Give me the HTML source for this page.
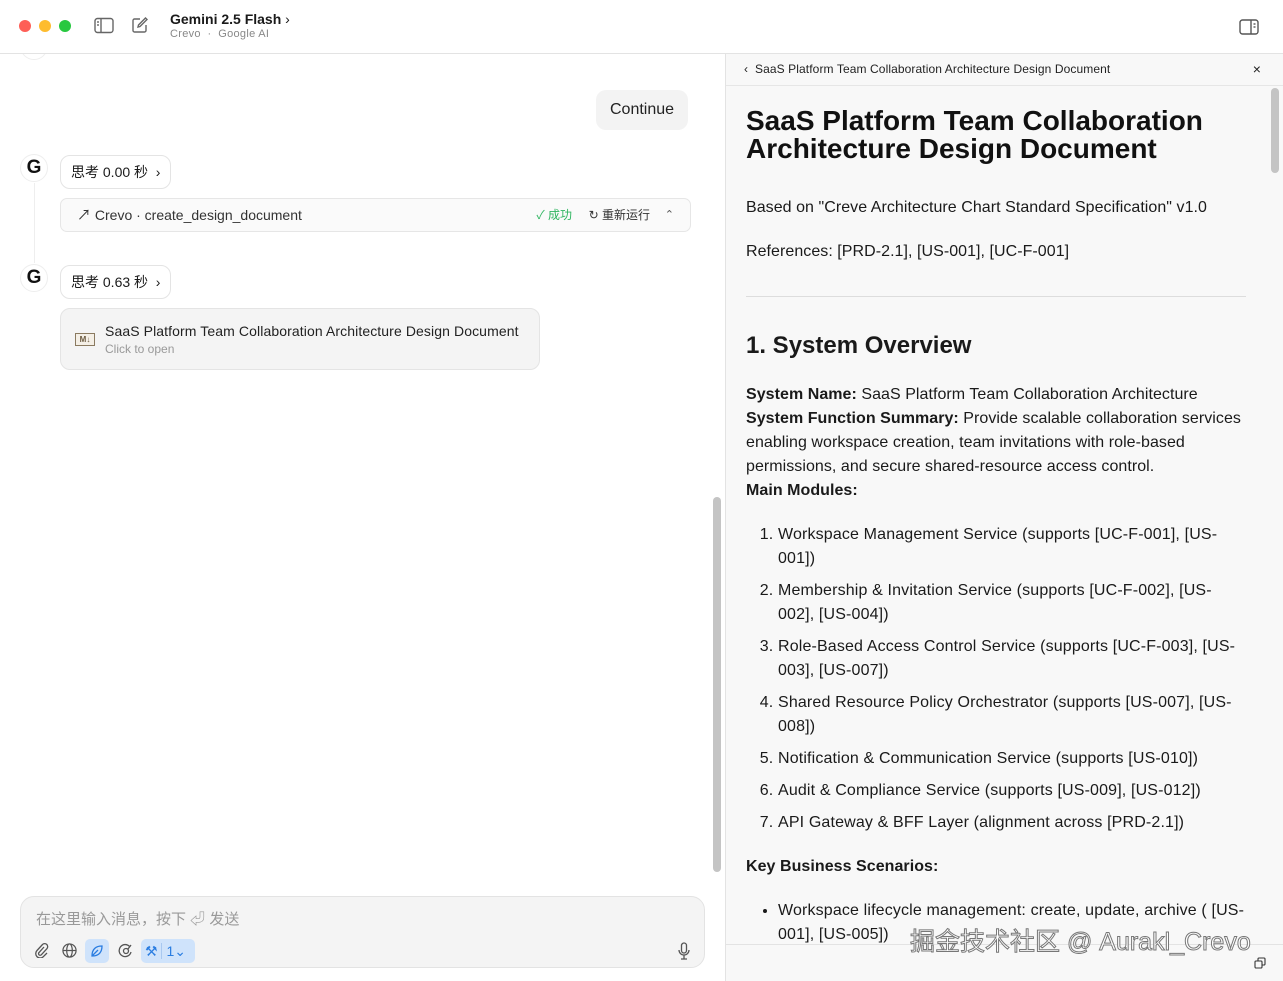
<!DOCTYPE html>
<html><head><meta charset="utf-8"><style>
*{box-sizing:border-box;margin:0;padding:0}
body{width:1283px;height:981px;overflow:hidden;background:#fff;font-family:"Liberation Sans","Noto Sans CJK SC",sans-serif;color:#1a1a1a;position:relative}
.abs{position:absolute}
.top{left:0;top:0;width:1283px;height:54px;border-bottom:1px solid #e3e3e3;background:#fff}
.dot{width:12px;height:12px;border-radius:50%;top:20px}
.pill{border:1px solid #e4e4e4;border-radius:10px;background:#fff;font-size:14px;height:34px;line-height:32px;padding:0 10px}
.gic{width:28px;height:28px;border-radius:50%;border:1px solid #eee;background:#fff;font-weight:bold;font-size:19px;text-align:center;line-height:26px;color:#111}
.doc{left:726px;top:86px;width:540px;height:858px;overflow:hidden;background:#f8f8f8;padding:0 20px}
.doc p{font-size:16px;line-height:24px;letter-spacing:.05px}
ol,ul{font-size:16px;line-height:24px;letter-spacing:.15px}
</style></head><body>
<div class="abs top">
 <div class="abs dot" style="left:19px;background:#fe5f57"></div>
 <div class="abs dot" style="left:39px;background:#febc2e"></div>
 <div class="abs dot" style="left:59px;background:#28c840"></div>
 <svg class="abs" style="left:94px;top:17px" width="20" height="17" viewBox="0 0 20 17" fill="none" stroke="#666" stroke-width="1.4"><rect x="1" y="1.5" width="18" height="14" rx="2.5"/><line x1="7" y1="1.5" x2="7" y2="15.5"/><line x1="3" y1="5" x2="5" y2="5"/><line x1="3" y1="8" x2="5" y2="8"/></svg>
 <svg class="abs" style="left:131px;top:16px" width="18" height="18" viewBox="0 0 18 18" fill="none" stroke="#666" stroke-width="1.4"><path d="M9 3H3.5A1.5 1.5 0 0 0 2 4.5v10A1.5 1.5 0 0 0 3.5 16h10a1.5 1.5 0 0 0 1.5-1.5V9"/><path d="M14.5 2l1.5 1.5L9 10.5 7 11l.5-2z"/></svg>
 <div class="abs" style="left:170px;top:11px;font-size:14px;font-weight:bold;color:#1a1a1a">Gemini 2.5 Flash <span style="font-weight:normal">›</span></div>
 <div class="abs" style="left:170px;top:28px;font-size:11px;color:#888;letter-spacing:.3px">Crevo &nbsp;·&nbsp; Google AI</div>
 <svg class="abs" style="left:1239px;top:19px" width="20" height="16" viewBox="0 0 20 16" fill="none" stroke="#555" stroke-width="1.4"><rect x="1" y="1" width="18" height="14" rx="2.5"/><line x1="12" y1="1" x2="12" y2="15"/><line x1="14.5" y1="5" x2="16.5" y2="5"/><line x1="14.5" y1="8" x2="16.5" y2="8"/></svg>
</div>
<div class="abs gic" style="left:20px;top:32px;z-index:-1">G</div>
<div class="abs" style="left:34px;top:183px;width:1px;height:80px;background:#eee"></div>
<div class="abs" style="left:596px;top:90px;height:40px;line-height:40px;padding:0 14px;background:#f3f3f3;border-radius:10px;font-size:16px;color:#222">Continue</div>
<div class="abs gic" style="left:20px;top:154px">G</div>
<div class="abs pill" style="left:60px;top:155px">思考 0.00 秒 &nbsp;›</div>
<div class="abs" style="left:60px;top:198px;width:631px;height:34px;border:1px solid #e6e6e6;border-radius:7px;background:#fafafa;font-size:14px;line-height:32px;padding-left:16px;color:#333">↗ Crevo · create_design_document
 <span class="abs" style="right:118px;top:0;font-size:12px;color:#2fb560">✓ 成功</span>
 <span class="abs" style="right:40px;top:0;font-size:12px;color:#333">↻ 重新运行</span>
 <span class="abs" style="right:16px;top:0;font-size:11px;color:#555">⌃</span></div>
<div class="abs gic" style="left:20px;top:264px">G</div>
<div class="abs pill" style="left:60px;top:265px">思考 0.63 秒 &nbsp;›</div>
<div class="abs" style="left:60px;top:308px;width:480px;height:62px;border:1px solid #e4e4e4;border-radius:10px;background:#f4f4f4">
 <div class="abs" style="left:14px;top:24px;width:20px;height:13px;border:1px solid #8a7a60;font-size:8px;font-weight:bold;line-height:11px;text-align:center;color:#6b5a40;background:#f4efe6">M↓</div>
 <div class="abs" style="left:44px;top:14px;font-size:14px;color:#222;white-space:nowrap;letter-spacing:.1px">SaaS Platform Team Collaboration Architecture Design Document</div>
 <div class="abs" style="left:44px;top:33px;font-size:12px;color:#999">Click to open</div>
</div>
<div class="abs" style="left:713px;top:497px;width:8px;height:375px;border-radius:4px;background:#c4c4c4"></div>
<div class="abs" style="left:20px;top:896px;width:685px;height:72px;border:1px solid #e3e3e3;border-radius:14px;background:#f4f4f4">
 <div class="abs" style="left:15px;top:11px;font-size:15px;color:#999">在这里输入消息，按下 ⏎ 发送</div>
 <svg class="abs" style="left:13px;top:45px" width="15" height="16" viewBox="0 0 15 16" fill="none" stroke="#555" stroke-width="1.3"><path d="M10 5l-5 5.5a1.6 1.6 0 0 0 2.3 2.3l5.5-6a3 3 0 0 0-4.3-4.3L3 8.5a4.4 4.4 0 0 0 6.3 6.2L13 11"/></svg>
 <svg class="abs" style="left:41px;top:46px" width="15" height="15" viewBox="0 0 16 16" fill="none" stroke="#555" stroke-width="1.3"><circle cx="8" cy="8" r="7"/><ellipse cx="8" cy="8" rx="3" ry="7"/><line x1="1" y1="8" x2="15" y2="8"/></svg>
 <div class="abs" style="left:64px;top:42px;width:24px;height:24px;border-radius:5px;background:#cfe3fb"></div>
 <svg class="abs" style="left:69px;top:47px" width="14" height="14" viewBox="0 0 14 14" fill="none" stroke="#2a7de1" stroke-width="1.3"><path d="M2 12C2 5 6 2 12 2c0 6-3 10-10 10zM2 12l6-6"/></svg>
 <svg class="abs" style="left:97px;top:46px" width="15" height="15" viewBox="0 0 15 15" fill="none" stroke="#555" stroke-width="1.3"><path d="M12 4A6 6 0 1 0 13 9"/><circle cx="8" cy="8" r="2.5"/><path d="M10 6l3-4"/></svg>
 <div class="abs" style="left:120px;top:42px;width:54px;height:24px;border-radius:5px;background:#cfe3fb;color:#2a7de1;font-size:14px;line-height:24px;padding-left:4px">⚒ <span style="border-left:1px solid #a8c8f0;padding-left:4px">1⌄</span></div>
 <svg class="abs" style="left:656px;top:45px" width="14" height="18" viewBox="0 0 14 18" fill="none" stroke="#555" stroke-width="1.3"><rect x="4.5" y="1" width="5" height="10" rx="2.5"/><path d="M2 8a5 5 0 0 0 10 0M7 13v4M4 17h6"/></svg>
</div>
<div class="abs" style="left:725px;top:54px;width:1px;height:927px;background:#e3e3e3"></div>
<div class="abs" style="left:726px;top:54px;width:557px;height:32px;background:#f8f8f8;border-bottom:1px solid #e6e6e6;font-size:12px;line-height:31px;padding-left:18px;color:#222;letter-spacing:.1px">‹ &nbsp;SaaS Platform Team Collaboration Architecture Design Document<span class="abs" style="right:22px;top:0;font-size:14px">×</span></div>
<div class="abs" style="left:726px;top:86px;width:557px;height:895px;background:#f8f8f8"></div>
<div class="abs doc">
 <h1 style="font-size:28px;line-height:28px;margin-top:21px;font-weight:bold;color:#111">SaaS Platform Team Collaboration Architecture Design Document</h1>
 <p style="margin-top:33px">Based on "Creve Architecture Chart Standard Specification" v1.0</p>
 <p style="margin-top:20px">References: [PRD-2.1], [US-001], [UC-F-001]</p>
 <div style="height:1px;background:#ddd;margin-top:32px"></div>
 <h2 style="font-size:24px;margin-top:34px;line-height:30px">1. System Overview</h2>
 <p style="margin-top:22px"><b>System Name:</b> SaaS Platform Team Collaboration Architecture<br><b>System Function Summary:</b> Provide scalable collaboration services enabling workspace creation, team invitations with role-based permissions, and secure shared-resource access control.<br><b>Main Modules:</b></p>
 <ol style="margin-top:20px;padding-left:32px">
  <li style="margin-bottom:8px">Workspace Management Service (supports [UC-F-001], [US-001])</li>
  <li style="margin-bottom:8px">Membership &amp; Invitation Service (supports [UC-F-002], [US-002], [US-004])</li>
  <li style="margin-bottom:8px">Role-Based Access Control Service (supports [UC-F-003], [US-003], [US-007])</li>
  <li style="margin-bottom:8px">Shared Resource Policy Orchestrator (supports [US-007], [US-008])</li>
  <li style="margin-bottom:8px">Notification &amp; Communication Service (supports [US-010])</li>
  <li style="margin-bottom:8px">Audit &amp; Compliance Service (supports [US-009], [US-012])</li>
  <li>API Gateway &amp; BFF Layer (alignment across [PRD-2.1])</li>
 </ol>
 <p style="margin-top:20px"><b>Key Business Scenarios:</b></p>
 <ul style="margin-top:20px;padding-left:32px"><li>Workspace lifecycle management: create, update, archive ( [US-001], [US-005])</li></ul>
</div>
<div class="abs" style="left:1271px;top:88px;width:8px;height:85px;border-radius:4px;background:#c4c4c4"></div>
<div class="abs" style="left:726px;top:944px;width:557px;height:37px;background:#f8f8f8;border-top:1px solid #e3e3e3"></div>
<svg class="abs" style="left:1254px;top:957px" width="12" height="12" viewBox="0 0 12 12" fill="none" stroke="#333" stroke-width="1.1"><rect x="1" y="4" width="7" height="7" rx="1"/><path d="M4 4V2a1 1 0 0 1 1-1h5a1 1 0 0 1 1 1v5a1 1 0 0 1-1 1H8"/></svg>
<div class="abs" style="left:910px;top:922px;font-size:25px;color:#fff;-webkit-text-stroke:1px #777;white-space:nowrap">掘金技术社区 @ Aurakl_Crevo</div>
</body></html>
